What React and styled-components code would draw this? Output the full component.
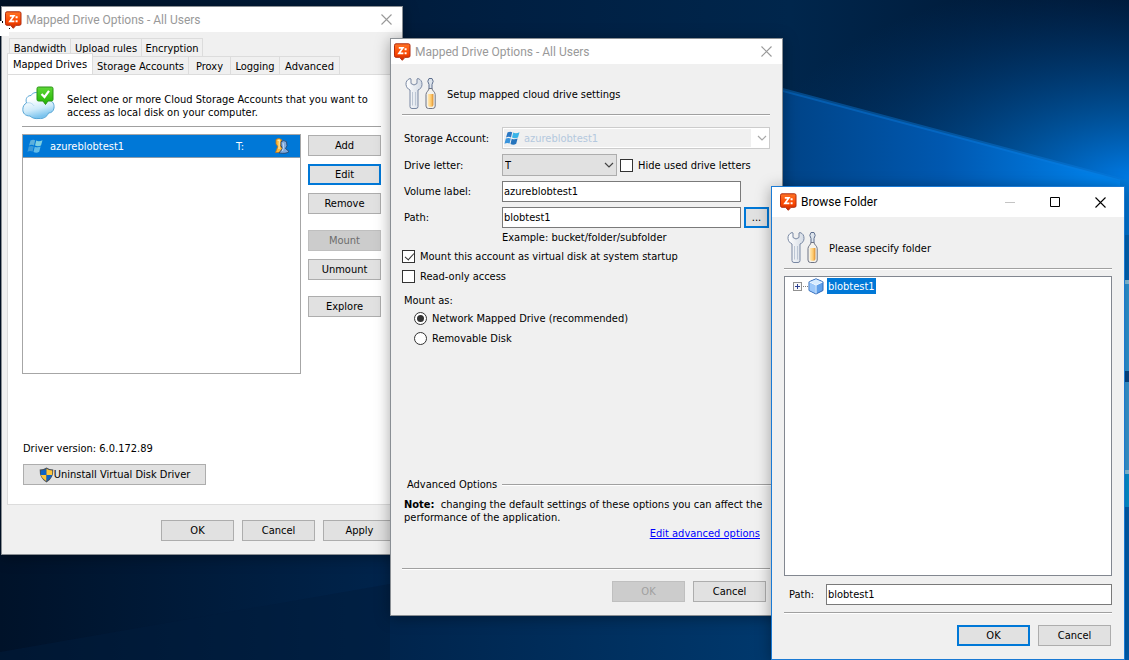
import React, { useState } from 'react';
import styled, { createGlobalStyle } from 'styled-components';

const GlobalStyle = createGlobalStyle`
  * {
    box-sizing: border-box;
  }

  body {
    margin: 0;
    background-color: #001a36;
    color: black;
    font-family: 'DejaVu Sans Condensed', 'DejaVu Sans', sans-serif;
    font-stretch: condensed;
    font-size: 11px;
    line-height: 13px;
  }

  button, input, select {
    font: inherit;
    color: inherit;
    margin: 0;
  }
`;

const Desktop = styled.main`
  position: relative;
  min-height: 100vh;
  overflow: hidden;
`;

const WallpaperSvg = styled.svg`
  position: absolute;
  inset: 0;
  width: 100%;
  height: 100%;
`;

const CursorSvg = styled.svg`
  position: absolute;
  left: 0;
  top: 20px;
`;

const Window = styled.section`
  position: absolute;
  left: ${props => props.$x}px;
  top: ${props => props.$y}px;
  width: ${props => props.$width}px;
  background-color: #f0f0f0;
  border: 1px solid ${props => (props.$active ? '#1a7ad4' : '#8a8f94')};
  box-shadow: 0 2px 14px rgba(0, 0, 0, 0.35);
`;

const TitleBar = styled.header`
  display: flex;
  align-items: center;
  height: ${props => (props.$active ? 30 : 25)}px;
  padding: 0 ${props => (props.$active ? 18 : 10)}px 0 ${props => (props.$active ? 8 : 3)}px;
  background-color: white;
  color: ${props => (props.$active ? 'black' : '#999')};
`;

const Title = styled.h1`
  flex: 1;
  margin: 0 0 0 4px;
  font-family: Roboto, 'Open Sans', sans-serif;
  font-stretch: normal;
  font-size: 12px;
  font-weight: 400;
  line-height: 16px;
  white-space: nowrap;
`;

const Controls = styled.div`
  display: flex;
  gap: 34px;
`;

const ControlButton = styled.button`
  display: flex;
  padding: 0;
  border: none;
  background: none;
`;

const Rule = styled.hr`
  height: 2px;
  margin: 0;
  border: none;
  border-top: 1px solid #a0a0a0;
  background-color: white;
`;

const Button = styled.button`
  display: flex;
  align-items: center;
  justify-content: center;
  width: ${props => props.$width || 73}px;
  height: 21px;
  padding: 0;
  border: ${props => (props.$focused ? '2px solid #0078d7' : '1px solid #adadad')};
  background-color: #e1e1e1;

  &:disabled {
    border-color: #bfbfbf;
    background-color: #ccc;
    color: ${props => (props.$faint ? '#a0a0a0' : '#6d6d6d')};
  }
`;

const Footer = styled.footer`
  display: flex;
  justify-content: flex-end;
  gap: 8px;
  padding: ${props => props.$pad};
`;

const Tabs = styled.nav`
  padding: 6px 5px 0;
`;

const TabRow = styled.div`
  display: flex;
  align-items: flex-end;
  height: 18px;
  padding-left: ${props => (props.$front ? 0 : 2)}px;
`;

const Tab = styled.button`
  width: ${props => props.$width}px;
  height: ${props => (props.$selected ? 21 : 18)}px;
  flex-shrink: 0;
  padding: ${props => (props.$selected ? 0 : 2)}px 0 0;
  border: 1px solid #dcdcdc;
  border-left-width: ${props => (props.$first ? 1 : 0)}px;
  border-bottom: none;
  background-color: ${props => (props.$selected ? 'white' : '#f0f0f0')};
  white-space: nowrap;
`;

const Panel = styled.div`
  margin: 0 5px;
  padding: 11px 15px 19px 14px;
  border: 1px solid #dcdcdc;
  background-color: white;
`;

const Intro = styled.div`
  display: flex;
  align-items: center;
  gap: ${props => props.$gap || 11}px;
`;

const Text = styled.p`
  margin: 0;
  padding-top: ${props => props.$drop || 0}px;
`;

const DriveArea = styled.div`
  display: flex;
  gap: 7px;
  margin-top: 6px;
`;

const DriveList = styled.ul`
  flex: 1;
  height: 240px;
  margin: 0;
  padding: 0;
  border: 1px solid #a6a6a6;
  list-style: none;
`;

const DriveRow = styled.li`
  display: flex;
  align-items: center;
  height: 23px;
  padding: 0 10px 0 4px;
  border-bottom: 1px solid #8c9cab;
  background-color: #0078d7;
  color: white;
`;

const DriveName = styled.span`
  flex: 1;
  margin-left: 7px;
`;

const DriveLetter = styled.span`
  width: 38px;
`;

const ButtonColumn = styled.div`
  display: flex;
  flex-direction: column;
  gap: 16px;
  padding-top: 1px;
`;

const ButtonGroup = styled.div`
  display: flex;
  flex-direction: column;
  gap: 8px;
`;

const DriverInfo = styled.div`
  display: flex;
  flex-direction: column;
  gap: 9px;
  padding: 68px 1px 0;
`;

const Form = styled.div`
  padding: ${props => props.$pad};
`;

const FormGrid = styled.div`
  display: grid;
  grid-template-columns: 98px 1fr;
  align-items: center;
  row-gap: 5px;
  padding: 11px 0 0 2px;
`;

const FieldRow = styled.div`
  display: flex;
  align-items: center;
  gap: 3px;
`;

const SelectBox = styled.div`
  position: relative;
  display: flex;
  width: ${props => (props.$width ? props.$width + 'px' : '100%')};

  > svg {
    position: absolute;
    top: 3px;
    left: 2px;
  }

  > svg:last-child {
    top: 7px;
    left: auto;
    right: 3px;
  }
`;

const Select = styled.select`
  appearance: none;
  width: 100%;
  height: 22px;
  padding: 0 20px 0 ${props => (props.$plain ? 21 : 2)}px;
  border: 1px solid ${props => (props.$plain ? '#ccc' : '#adadad')};
  border-radius: 0;
  background-color: #e1e1e1;

  &:disabled {
    background: linear-gradient(to left, white 18px, #f0f0f0 18px);
    box-shadow: inset 0 0 0 1px white;
    color: #b4c8de;
    opacity: 1;
  }
`;

const Input = styled.input`
  width: ${props => (props.$width ? props.$width + 'px' : '100%')};
  height: 21px;
  padding: 0 1px;
  border: 1px solid #7a7a7a;
  border-radius: 0;
  background-color: white;
`;

const Check = styled.label`
  display: flex;
  align-items: center;
  gap: 5px;
  height: 20px;
`;

const Tick = styled.input`
  appearance: none;
  position: relative;
  width: 13px;
  height: 13px;
  border: 1px solid #333;
  border-radius: ${props => (props.type === 'radio' ? '50%' : 0)};
  background-color: white;

  &[type='checkbox']:checked::after {
    content: '';
    position: absolute;
    left: 4px;
    top: 0;
    width: 4px;
    height: 8px;
    border: solid #333;
    border-width: 0 1px 1px 0;
    transform: rotate(42deg);
  }

  &[type='radio']:checked::after {
    content: '';
    position: absolute;
    inset: 2px;
    border-radius: 50%;
    background-color: #333;
  }
`;

const Fieldset = styled.fieldset`
  margin: 8px 0 0;
  padding: 1px 0 0 12px;
  border: none;
`;

const Legend = styled.legend`
  margin-left: -10px;
  padding: 0;
`;

const SectionHead = styled.div`
  display: flex;
  align-items: center;
  gap: 5px;
  margin: 130px -12px 7px 5px;

  hr {
    flex: 1;
  }
`;

const LinkLine = styled.div`
  margin: 3px 10px 28px 0;
  text-align: right;

  a {
    color: #0000ff;
  }
`;

const Tree = styled.ul`
  height: 300px;
  margin: 6px 0 8px;
  padding: 0 0 0 8px;
  border: 1px solid #828790;
  background-color: white;
  list-style: none;
`;

const TreeItem = styled.li`
  display: flex;
  align-items: center;
  height: 18px;
`;

const TreeLabel = styled.span`
  height: 16px;
  padding: 2px 1px 1px;
  margin-left: 3px;
  background-color: #0078d7;
  color: white;
`;

const PathRow = styled.div`
  display: grid;
  grid-template-columns: 37px 1fr;
  align-items: center;
  padding: 0 0 7px 5px;
`;

const Wallpaper = () => (
  <WallpaperSvg viewBox="0 0 1129 660" preserveAspectRatio="none" aria-hidden="true">
    <defs>
      <linearGradient id="night" x1="0" y1="0" x2="1" y2="0">
        <stop offset="0" stopColor="#001329" />
        <stop offset="0.45" stopColor="#001f42" />
        <stop offset="0.7" stopColor="#00264c" />
        <stop offset="1" stopColor="#001530" />
      </linearGradient>
      <radialGradient id="glow" gradientUnits="userSpaceOnUse" cx="1140" cy="185" r="390" gradientTransform="translate(0 85) scale(1 0.54)">
        <stop offset="0" stopColor="#0080f0" />
        <stop offset="0.35" stopColor="#005cac" stopOpacity="0.8" />
        <stop offset="1" stopColor="#003a78" stopOpacity="0" />
      </radialGradient>
      <linearGradient id="beam" x1="0" y1="0" x2="1" y2="0">
        <stop offset="0" stopColor="#004080" />
        <stop offset="0.5" stopColor="#0058b0" />
        <stop offset="1" stopColor="#0088f4" />
      </linearGradient>
      <linearGradient id="floor" x1="0" y1="0" x2="1" y2="0">
        <stop offset="0" stopColor="#001229" />
        <stop offset="0.5" stopColor="#00244c" />
        <stop offset="1" stopColor="#00396e" />
      </linearGradient>
    </defs>
    <rect width="1129" height="660" fill="url(#night)" />
    <rect width="1129" height="660" fill="url(#glow)" />
    <path d="M760 84L1129 182V660H760Z" fill="url(#beam)" />
    <path d="M760 84L1129 182" stroke="#0b7de0" strokeWidth="4" opacity="0.400" />
    <path d="M0 540H780V660H0Z" fill="url(#floor)" />
    <path d="M0 652L390 584V660H0Z" fill="#001c3c" opacity="0.5" />
    <path d="M1120 180h9v55h-9z" fill="#0078d8" />
    <path d="M1120 235h9v46h-9z" fill="#0068ba" />
    <path d="M1120 281h9v90h-9z" fill="#2f9bdc" />
    <path d="M1120 371h9v11h-9z" fill="#054a8c" />
    <path d="M1120 382h9v88h-9z" fill="#3a9edb" />
    <path d="M1120 280h9v4h-9zM1120 470h9v4h-9z" fill="#8cc8e4" />
    <path d="M1120 474h9v33h-9z" fill="#0496d8" />
    <path d="M1120 507h9v153h-9z" fill="#0062b4" />
  </WallpaperSvg>
);

const AppIcon = () => (
  <svg width="17" height="18" viewBox="0 0 17 18" aria-hidden="true">
    <defs>
      <linearGradient id="flame" x1="0" y1="0" x2="0" y2="1">
        <stop offset="0" stopColor="#ff7426" />
        <stop offset="0.600" stopColor="#fb4600" />
        <stop offset="1" stopColor="#c42800" />
      </linearGradient>
    </defs>
    <path d="M2 .8h12.500q1.500 0 1.500 1.500v10.500q0 1.500-1.500 1.500h-3.500l-2.700 3-2.700-3H2q-1.500 0-1.500-1.500V2.300Q.5 .8 2 .8z" fill="url(#flame)" stroke="#b02c10" />
    <path d="M4.800 4.900H8.800L5 10.300H9.400" fill="none" stroke="white" strokeWidth="1.800" />
    <path d="M10.600 5.200h2v2h-2zM10.600 9.200h2v2h-2z" fill="white" />
  </svg>
);

const CloseIcon = () => (
  <svg width="11" height="11" viewBox="0 0 11 11" aria-hidden="true">
    <path d="M.5 .5L10.500 10.500M10.500 .5L.5 10.500" stroke="currentColor" strokeWidth="1.100" />
  </svg>
);

const CloudIcon = () => (
  <svg width="34" height="34" viewBox="0 0 34 34" aria-hidden="true">
    <defs>
      <linearGradient id="cloud" x1="0" y1="0" x2="0.300" y2="1">
        <stop offset="0.300" stopColor="#ffffff" />
        <stop offset="0.700" stopColor="#cdeafa" />
        <stop offset="1" stopColor="#7cc4ee" />
      </linearGradient>
      <linearGradient id="leaf" x1="0" y1="0" x2="0" y2="1">
        <stop offset="0" stopColor="#5fd838" />
        <stop offset="1" stopColor="#1fb400" />
      </linearGradient>
    </defs>
    <path d="M8 30C3 30 .8 27 .8 23.500C.8 20 2.500 18 4.500 17C3 12 6 9.500 9 9.500C10.500 6.500 15 5.500 18 7.500C22 5.500 27 9 27 14C31 15 32.500 18.500 32 22C31.500 25.500 29 27 26.500 27C25 31 21 33 17 32.500C13 33 10 32 8 30Z" fill="url(#cloud)" stroke="#5aa7d6" />
    <path d="M5 17C8 16 11 18 12 20M27 14C25 14 23 15 22 17" fill="none" stroke="#b4dcf2" />
    <path d="M16.500 1h13q1.500 0 1.500 1.500v11q0 1.500-1.500 1.500H26l-2.500 3.500L21 15h-4.500q-1.500 0-1.500-1.500v-11q0-1.500 1.500-1.500z" fill="url(#leaf)" stroke="#2b9316" />
    <path d="M19.500 8l3 3L27 4.800" fill="none" stroke="white" strokeWidth="2.200" />
  </svg>
);

const ToolsIcon = () => (
  <svg width="31" height="33" viewBox="0 0 31 33" aria-hidden="true">
    <defs>
      <linearGradient id="steel" x1="0" y1="0" x2="1" y2="0">
        <stop offset="0" stopColor="#ffffff" />
        <stop offset="1" stopColor="#d4dbe5" />
      </linearGradient>
      <linearGradient id="amber" x1="0" y1="0" x2="1" y2="0">
        <stop offset="0" stopColor="#ffe9b8" />
        <stop offset="0.600" stopColor="#ffc96a" />
        <stop offset="1" stopColor="#d88a2c" />
      </linearGradient>
    </defs>
    <path d="M5 1.500C2 2.500 .8 5 1 7.500C1.200 10 2.800 12 5 13V29.500Q5 31.500 7 31.500H11Q13 31.500 13 29.500V13C15.500 12 17 10 17 7.500C17 4.500 16 2.500 13 1.500L12 2V6.500L9 8L6 6.500V2Z" fill="url(#steel)" stroke="#7887a2" />
    <path d="M7.500 15V28.500M10.500 15V28.500" stroke="#bcc6d4" />
    <path d="M24 1.500h3L28.200 4.300L27 7.500V12H24V7.500L22.800 4.300Z" fill="#dde4ec" stroke="#5e6f8e" />
    <path d="M24 11.500h3C27 13.500 30.200 15 30.200 17.500V29Q30.200 31.500 27.700 31.500H23.500Q21 31.500 21 29V17.500C21 15 24 13.500 24 11.500Z" fill="#f4f2ec" stroke="#6f7484" />
    <path d="M22.800 17h5.600V28q0 1.800-1.800 1.800h-2q-1.800 0-1.800-1.800z" fill="url(#amber)" />
  </svg>
);

const AzureIcon = ({ size = 16, pale }) => (
  <svg width={size} height={size} viewBox="0 0 16 16" aria-hidden="true">
    <path d="M3.500 2.500Q6 1 8.200 2.200L7 7.400Q4.600 6.200 2 7.600Z" fill={pale ? '#5cb0dc' : '#2c78c4'} />
    <path d="M9.200 2.600Q12 4 15.500 2.200L14 7.600Q11 9 8 7.600Z" fill={pale ? '#7fcfe0' : '#38b4e8'} />
    <path d="M1.800 8.500Q4.500 7.400 6.800 8.500L5.600 13.500Q3 12.500 .5 13.800Z" fill={pale ? '#3c9ad8' : '#3a94dc'} />
    <path d="M7.700 8.700Q10.500 10 13.600 8.500L12.200 13.800Q9.500 15.500 6.500 14Z" fill={pale ? '#62bce8' : '#2674bc'} />
  </svg>
);

const UsersIcon = () => (
  <svg width="16" height="16" viewBox="0 0 16 16" aria-hidden="true">
    <path d="M2 1.500Q4.500 -.3 7.500 1.500L7.800 5.500L6.500 8L9 12L8 14.500H1.500L3.800 8.500L2 6Z" fill="#ffb836" stroke="#bd731b" strokeWidth="0.800" />
    <path d="M3.600 2.300L5.400 2.200L5 11" fill="none" stroke="#ffe8a8" strokeWidth="1.200" />
    <path d="M7 3.700Q9.800 1.500 12.500 3.700L13 7.800L11.500 10.500L15 13.500Q12 16.300 5 14.900L8.500 10.500L7 7.500Z" fill="#7fa9dc" stroke="#29486e" strokeWidth="0.900" />
    <path d="M9 4.800L9.600 8.500L8.500 13" fill="none" stroke="#c8def5" />
  </svg>
);

const ShieldIcon = () => (
  <svg width="15" height="16" viewBox="0 0 15 16" aria-hidden="true">
    <path d="M7.500 .5Q10 2.500 14.300 2.500Q14.800 11 7.500 15.500Q.2 11 .7 2.500Q5 2.500 7.500 .5Z" fill="#4a4f55" />
    <path d="M7.500 1.700V8H1.900Q1.600 6 1.800 3.500Q5.500 3.300 7.500 1.700Z" fill="#0f63c4" />
    <path d="M7.500 1.700V8H13.100Q13.400 6 13.200 3.500Q9.500 3.300 7.500 1.700Z" fill="#ffc63a" />
    <path d="M7.500 8V14.300Q3 11.500 1.900 8Z" fill="#ffc63a" />
    <path d="M7.500 8V14.300Q12 11.500 13.100 8Z" fill="#0f63c4" />
  </svg>
);

const ChevronIcon = ({ color }) => (
  <svg width="10" height="8" viewBox="0 0 10 8" aria-hidden="true">
    <path d="M1 2L5 6L9 2" fill="none" stroke={color} strokeWidth="1.200" />
  </svg>
);

const ExpandIcon = () => (
  <svg width="15" height="9" viewBox="0 0 15 9" aria-hidden="true">
    <rect x="0.500" y="0.500" width="8" height="8" fill="#f8f8f8" stroke="#919191" />
    <path d="M2 4.500H7M4.500 2V7" stroke="#2b3f91" />
    <path d="M10 4.500H15" stroke="#808080" strokeDasharray="1 1" />
  </svg>
);

const BucketIcon = () => (
  <svg width="16" height="17" viewBox="0 0 16 17" aria-hidden="true">
    <path d="M8 .8L15 3.800V12.500L8 16L1 12.500V3.800Z" fill="#5f9fea" stroke="#2f68b8" strokeLinejoin="round" />
    <path d="M8 1.300L14.500 4L8 7.200L1.500 4Z" fill="#d6ebff" />
    <path d="M1.500 4.600L7.500 7.600V15.200L1.500 12.200Z" fill="#9cc8fa" />
    <path d="M1.500 4L8 7.200L14.500 4M8 7.200V15.500" fill="none" stroke="#eef7ff" />
  </svg>
);

const CursorTrace = () => (
  <CursorSvg width="10" height="16" viewBox="0 0 10 16" aria-hidden="true">
    <path d="M0 1H2V12H9V16H0Z" fill="white" />
    <path d="M2 1H3V3H2ZM9 8H10V9H9Z" fill="black" />
  </CursorSvg>
);

const backTabs = [
  { name: 'Bandwidth', width: 62 },
  { name: 'Upload rules', width: 71 },
  { name: 'Encryption', width: 61 },
];

const frontTabs = [
  { name: 'Mapped Drives', width: 86 },
  { name: 'Storage Accounts', width: 96 },
  { name: 'Proxy', width: 42 },
  { name: 'Logging', width: 49 },
  { name: 'Advanced', width: 60 },
];

const OptionsWindow = () => (
  <Window $x={1} $y={6} $width={402} aria-label="Mapped Drive Options">
    <TitleBar>
      <AppIcon />
      <Title>Mapped Drive Options - All Users</Title>
      <ControlButton aria-label="Close"><CloseIcon /></ControlButton>
    </TitleBar>
    <Tabs>
      <TabRow>
        {backTabs.map((tab, i) => (
          <Tab key={tab.name} $width={tab.width} $first={i === 0}>{tab.name}</Tab>
        ))}
      </TabRow>
      <TabRow $front>
        {frontTabs.map((tab, i) => (
          <Tab key={tab.name} $width={tab.width} $first={i === 0} $selected={i === 0}>{tab.name}</Tab>
        ))}
      </TabRow>
    </Tabs>
    <Panel>
      <Intro>
        <CloudIcon />
        <Text $drop={6}>
          Select one or more Cloud Storage Accounts that you want to
          <br />
          access as local disk on your computer.
        </Text>
      </Intro>
      <Form $pad="6px 0 0">
        <Rule />
      </Form>
      <DriveArea>
        <DriveList>
          <DriveRow>
            <AzureIcon pale />
            <DriveName>azureblobtest1</DriveName>
            <DriveLetter>T:</DriveLetter>
            <UsersIcon />
          </DriveRow>
        </DriveList>
        <ButtonColumn>
          <ButtonGroup>
            <Button>Add</Button>
            <Button $focused>Edit</Button>
            <Button>Remove</Button>
          </ButtonGroup>
          <ButtonGroup>
            <Button disabled>Mount</Button>
            <Button>Unmount</Button>
          </ButtonGroup>
          <Button>Explore</Button>
        </ButtonColumn>
      </DriveArea>
      <DriverInfo>
        <Text>Driver version: 6.0.172.89</Text>
        <Button $width={183}><ShieldIcon />Uninstall Virtual Disk Driver</Button>
      </DriverInfo>
    </Panel>
    <Footer $pad="15px 6px 13px">
      <Button>OK</Button>
      <Button>Cancel</Button>
      <Button>Apply</Button>
    </Footer>
  </Window>
);

const DriveWindow = () => {
  const [label, setLabel] = useState('azureblobtest1');
  const [path, setPath] = useState('blobtest1');

  return (
    <Window $x={390} $y={38} $width={393} aria-label="Drive settings">
      <TitleBar>
        <AppIcon />
        <Title>Mapped Drive Options - All Users</Title>
        <ControlButton aria-label="Close"><CloseIcon /></ControlButton>
      </TitleBar>
      <Form $pad="13px 12px 0 11px">
        <Form $pad="0 0 4px 3px">
          <Intro>
            <ToolsIcon />
            <Text $drop={2}>Setup mapped cloud drive settings</Text>
          </Intro>
        </Form>
        <Rule />
        <FormGrid>
          <label htmlFor="account">Storage Account:</label>
          <SelectBox>
            <AzureIcon />
            <Select id="account" $plain disabled defaultValue="azureblobtest1">
              <option>azureblobtest1</option>
            </Select>
            <ChevronIcon color="#a8a8a8" />
          </SelectBox>
          <label htmlFor="letter">Drive letter:</label>
          <FieldRow>
            <SelectBox $width={115}>
              <Select id="letter" defaultValue="T">
                <option>T</option>
              </Select>
              <ChevronIcon color="#444" />
            </SelectBox>
            <Check>
              <Tick type="checkbox" />
              Hide used drive letters
            </Check>
          </FieldRow>
          <label htmlFor="volume">Volume label:</label>
          <Input id="volume" $width={239} value={label} onChange={e => setLabel(e.target.value)} />
          <label htmlFor="path">Path:</label>
          <FieldRow>
            <Input id="path" $width={239} value={path} onChange={e => setPath(e.target.value)} />
            <Button $width={25} $focused aria-label="Browse">...</Button>
          </FieldRow>
        </FormGrid>
        <Form $pad="3px 0 2px 100px">
          <Text>Example: bucket/folder/subfolder</Text>
        </Form>
        <Check>
          <Tick type="checkbox" defaultChecked />
          Mount this account as virtual disk at system startup
        </Check>
        <Check>
          <Tick type="checkbox" />
          Read-only access
        </Check>
        <Fieldset>
          <Legend>Mount as:</Legend>
          <Check>
            <Tick type="radio" name="mount" defaultChecked />
            Network Mapped Drive (recommended)
          </Check>
          <Check>
            <Tick type="radio" name="mount" />
            Removable Disk
          </Check>
        </Fieldset>
        <SectionHead>
          Advanced Options
          <Rule />
        </SectionHead>
        <Form $pad="0 0 0 2px">
          <Text>
            <b>Note:</b>&nbsp; changing the default settings of these options you can affect the
            <br />
            performance of the application.
          </Text>
        </Form>
        <LinkLine>
          <a href="#advanced">Edit advanced options</a>
        </LinkLine>
        <Rule />
      </Form>
      <Footer $pad="11px 16px 13px">
        <Button disabled $faint>OK</Button>
        <Button>Cancel</Button>
      </Footer>
    </Window>
  );
};

const BrowseWindow = () => {
  const [path, setPath] = useState('blobtest1');

  return (
    <Window $x={771} $y={186} $width={354} $active aria-label="Browse Folder">
      <TitleBar $active>
        <AppIcon />
        <Title>Browse Folder</Title>
        <Controls>
          <ControlButton aria-label="Minimize">
            <svg width="11" height="11" viewBox="0 0 11 11"><path d="M0 5.500H10" stroke="#c4c4c4" /></svg>
          </ControlButton>
          <ControlButton aria-label="Maximize">
            <svg width="11" height="11" viewBox="0 0 11 11"><path d="M.5 .5H9.500V9.500H.5Z" fill="none" stroke="black" /></svg>
          </ControlButton>
          <ControlButton aria-label="Close"><CloseIcon /></ControlButton>
        </Controls>
      </TitleBar>
      <Form $pad="14px 12px 0">
        <Form $pad="0 0 4px 3px">
          <Intro>
            <ToolsIcon />
            <Text $drop={2}>Please specify folder</Text>
          </Intro>
        </Form>
        <Rule />
        <Tree>
          <TreeItem>
            <ExpandIcon />
            <BucketIcon />
            <TreeLabel>blobtest1</TreeLabel>
          </TreeItem>
        </Tree>
        <PathRow>
          <label htmlFor="folder">Path:</label>
          <Input id="folder" value={path} onChange={e => setPath(e.target.value)} />
        </PathRow>
        <Rule />
      </Form>
      <Footer $pad="11px 13px 13px">
        <Button $focused>OK</Button>
        <Button>Cancel</Button>
      </Footer>
    </Window>
  );
};

const App = () => (
  <>
    <GlobalStyle />
    <Desktop>
      <Wallpaper />
      <OptionsWindow />
      <DriveWindow />
      <BrowseWindow />
      <CursorTrace />
    </Desktop>
  </>
);

export default App;
